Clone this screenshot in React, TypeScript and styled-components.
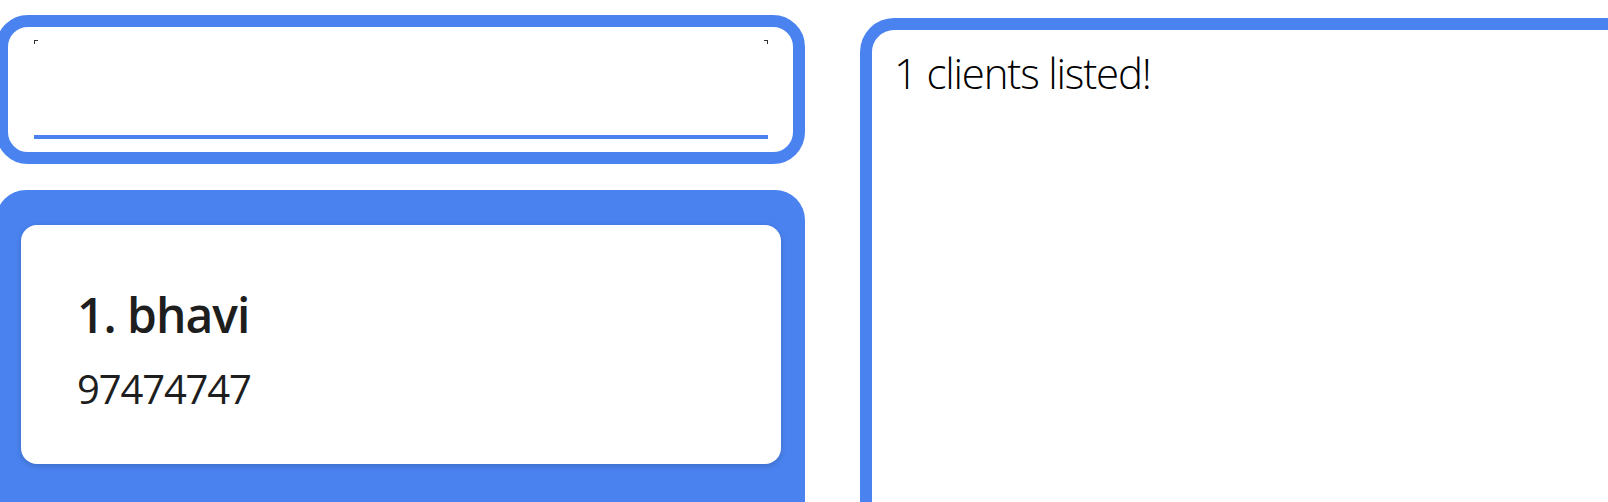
import styled, { createGlobalStyle } from "styled-components";

const BLUE = "#4a83f0";

const GlobalStyle = createGlobalStyle`
  html, body {
    margin: 0;
    padding: 0;
    background: #ffffff;
    overflow: hidden;
  }
  body {
    width: 1608px;
    height: 502px;
    font-family: "Open Sans", "Noto Sans", sans-serif;
  }
`;

const clients = [{ name: "bhavi", phone: "97474747" }];

const App: React.FC = () => {
  return (
    <>
      <GlobalStyle />
      <Page>
        <LeftColumn>
          <CommandBox>
            <CommandField />
          </CommandBox>
          <ListPanel>
            {clients.map((client, index) => (
              <ClientCard key={index}>
                <ClientName>
                  {index + 1}. {client.name}
                </ClientName>
                <ClientPhone>{client.phone}</ClientPhone>
              </ClientCard>
            ))}
          </ListPanel>
        </LeftColumn>
        <ResultPanel>
          <ResultText>{clients.length} clients listed!</ResultText>
        </ResultPanel>
      </Page>
    </>
  );
};

export default App;

const Page = styled.div`
  display: flex;
  align-items: flex-start;
  width: 1608px;
  height: 502px;
  overflow: hidden;
`;

const LeftColumn = styled.div`
  flex: 0 0 809px;
  margin-left: -4px;
  display: flex;
  flex-direction: column;
  gap: 26px;
  padding-top: 15px;
`;

const CommandBox = styled.div`
  box-sizing: border-box;
  height: 149px;
  border: 12px solid ${BLUE};
  border-radius: 32px;
  padding: 13px 25px 13px 26px;
  display: flex;
  align-items: stretch;
`;

const CommandField = styled.div`
  position: relative;
  flex: 1;
  background: #ffffff;
  border-bottom: 4px solid ${BLUE};

  &::before,
  &::after {
    content: "";
    position: absolute;
    top: 0;
    width: 3px;
    height: 3px;
    border-top: 1px solid #333;
  }
  &::before {
    left: 0;
    border-left: 1px solid #333;
  }
  &::after {
    right: 0;
    border-right: 1px solid #333;
  }
`;

const ListPanel = styled.div`
  box-sizing: border-box;
  height: 360px;
  background: ${BLUE};
  border-radius: 30px 30px 0 0;
  padding: 35px 24px 0 25px;
`;

const ClientCard = styled.div`
  box-sizing: border-box;
  height: 239px;
  background: #ffffff;
  border-radius: 16px;
  box-shadow: 0 2px 6px rgba(0, 0, 0, 0.18);
  padding: 66px 0 0 56px;
  color: #1e1e1e;
`;

const ClientName = styled.div`
  font-size: 48px;
  line-height: 48px;
  font-weight: 600;
  letter-spacing: -1px;
`;

const ClientPhone = styled.div`
  margin-top: 30px;
  font-size: 40px;
  line-height: 40px;
  font-weight: 400;
  letter-spacing: -1.15px;
`;

const ResultPanel = styled.div`
  box-sizing: border-box;
  flex: 0 0 820px;
  height: 520px;
  margin-left: 55px;
  margin-top: 18px;
  border-top: 12px solid ${BLUE};
  border-left: 12px solid ${BLUE};
  border-radius: 34px 0 0 0;
  padding: 22px 0 0 22px;
`;

const ResultText = styled.div`
  font-size: 42px;
  line-height: 42px;
  font-weight: 300;
  letter-spacing: -1.2px;
  color: #000000;
`;
